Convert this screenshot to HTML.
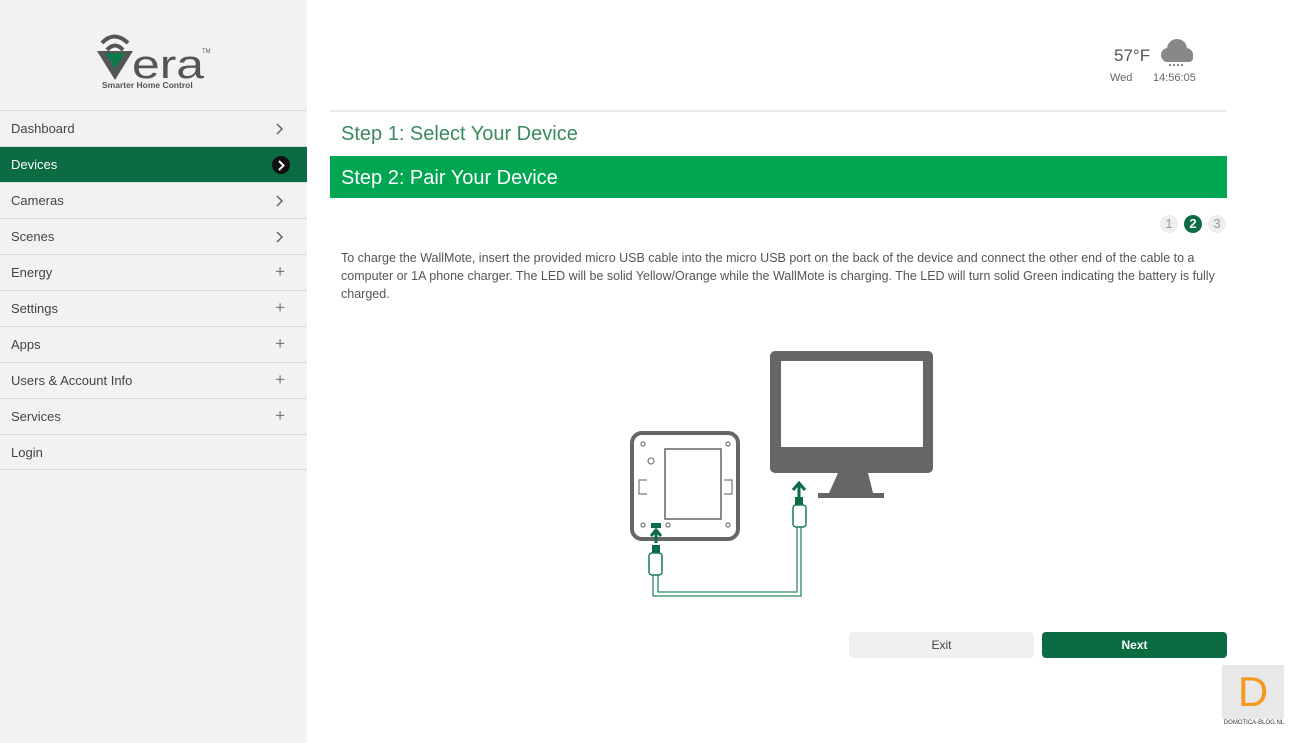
<!DOCTYPE html>
<html><head><meta charset="utf-8"><style>
*{margin:0;padding:0;box-sizing:border-box}
body{width:1300px;height:743px;overflow:hidden;background:#fff;font-family:"Liberation Sans",sans-serif;position:relative}
#side{position:absolute;left:0;top:0;width:307px;height:743px;background:#f2f2f2}
.it{position:absolute;left:0;width:307px;height:36px;border-top:1px solid #d9d9d9;font-size:13px;color:#444;padding:10px 0 0 11px}
.it .a{position:absolute;right:22px;top:7px;font-size:17px;color:#777}
.it svg.a{top:12px;right:23px}
.act{background:#0b6b43;color:#fff}
.abs{position:absolute}
</style></head><body>
<div id="side">
<svg class="abs" style="left:95px;top:30px" width="120" height="62">
<path d="M7 13 Q19 0 33 13" stroke="#555" stroke-width="4" fill="none"/>
<path d="M12 20 Q20 11 28 20" stroke="#555" stroke-width="4" fill="none"/>
<path d="M2 21 L20 50 L38 21 Z" fill="#555"/><path d="M10 23 L20 39 L30 23Z" fill="#0b7a4b"/>
<text x="37" y="48" font-size="40" font-family="Liberation Sans" fill="#555" textLength="72" lengthAdjust="spacingAndGlyphs">era</text>
<text x="107" y="23" font-size="6" fill="#555">TM</text>
<text x="7" y="58" font-size="8.5" font-weight="bold" fill="#555">Smarter Home Control</text>
</svg>
<div class="it" style="top:110px">Dashboard<svg class="a" width="8" height="12"><path d="M1 1l5 5-5 5" stroke="#666" stroke-width="1.5" fill="none"/></svg></div>
<div class="it act" style="top:146px">Devices<span style="position:absolute;right:17px;top:9px;width:18px;height:18px;border-radius:9px;background:#111"><svg style="position:absolute;left:6px;top:4px" width="8" height="11"><path d="M1 1l4.5 4.5L1 10" stroke="#fff" stroke-width="2" fill="none"/></svg></span></div>
<div class="it" style="top:182px">Cameras<svg class="a" width="8" height="12"><path d="M1 1l5 5-5 5" stroke="#666" stroke-width="1.5" fill="none"/></svg></div>
<div class="it" style="top:218px">Scenes<svg class="a" width="8" height="12"><path d="M1 1l5 5-5 5" stroke="#666" stroke-width="1.5" fill="none"/></svg></div>
<div class="it" style="top:254px">Energy<span class="a">+</span></div>
<div class="it" style="top:290px">Settings<span class="a">+</span></div>
<div class="it" style="top:326px">Apps<span class="a">+</span></div>
<div class="it" style="top:362px">Users &amp; Account Info<span class="a">+</span></div>
<div class="it" style="top:398px">Services<span class="a">+</span></div>
<div class="it" style="top:434px;border-bottom:1px solid #d9d9d9;height:36px">Login</div>
</div>
<div class="abs" style="left:1114px;top:46px;font-size:17px;color:#555">57°F</div>
<svg class="abs" style="left:1158px;top:36px" width="38" height="34"><circle cx="19" cy="13" r="10" fill="#888"/><circle cx="10" cy="19" r="7" fill="#888"/><circle cx="28" cy="19" r="7" fill="#888"/><rect x="5" y="16" width="30" height="10" rx="4" fill="#888"/><g fill="#888"><circle cx="12" cy="29" r="1.2"/><circle cx="16" cy="29" r="1.2"/><circle cx="20" cy="29" r="1.2"/><circle cx="24" cy="29" r="1.2"/></g></svg>
<div class="abs" style="left:1110px;top:72px;font-size:11px;color:#666">Wed</div>
<div class="abs" style="left:1153px;top:72px;font-size:11px;color:#666">14:56:05</div>
<div class="abs" style="left:330px;top:110px;width:897px;border-top:2px solid #eaeaea"></div>
<div class="abs" style="left:341px;top:123px;font-size:20px;color:#3a8a5c">Step 1: Select Your Device</div>
<div class="abs" style="left:330px;top:156px;width:897px;height:42px;background:#00a651;color:#fff;font-size:20px;padding:11px 0 0 11px">Step 2: Pair Your Device</div>
<div class="abs" style="left:1160px;top:215px;width:18px;height:18px;border-radius:9px;background:#eee;color:#999;font-size:13px;text-align:center;line-height:18px">1</div>
<div class="abs" style="left:1184px;top:215px;width:18px;height:18px;border-radius:9px;background:#0b6b43;color:#fff;font-size:13px;font-weight:bold;text-align:center;line-height:18px">2</div>
<div class="abs" style="left:1208px;top:215px;width:18px;height:18px;border-radius:9px;background:#eee;color:#999;font-size:13px;text-align:center;line-height:18px">3</div>
<div class="abs" style="left:341px;top:249px;width:900px;white-space:nowrap;font-size:12.5px;line-height:18px;color:#555">To charge the WallMote, insert the provided micro USB cable into the micro USB port on the back of the device and connect the other end of the cable to a<br>computer or 1A phone charger. The LED will be solid Yellow/Orange while the WallMote is charging. The LED will turn solid Green indicating the battery is fully<br>charged.</div>
<svg class="abs" style="left:600px;top:340px" width="350" height="270">
<rect x="32" y="93" width="106" height="106" rx="10" fill="#fff" stroke="#666" stroke-width="4"/>
<rect x="65" y="109" width="56" height="70" fill="none" stroke="#666" stroke-width="1.5"/>
<g fill="none" stroke="#777" stroke-width="1.2"><circle cx="43" cy="104" r="2"/><circle cx="128" cy="104" r="2"/><circle cx="51" cy="121" r="3"/><circle cx="43" cy="185" r="2"/><circle cx="68" cy="185" r="2"/><circle cx="128" cy="185" r="2"/><path d="M47 140h-8v14h8"/><path d="M124 140h8v14h-8"/></g>
<rect x="170" y="11" width="163" height="122" rx="5" fill="#666"/>
<rect x="181" y="21" width="142" height="86" fill="#fff"/>
<path d="M238 133h30l5 20h11v5h-66v-5h11z" fill="#666"/>
<rect x="51" y="183" width="10" height="5" fill="#0b6b43"/>
<path d="M56 203v-12m-5 5l5-6 5 6" stroke="#0b6b43" stroke-width="3" fill="none"/>
<rect x="52" y="205" width="8" height="8" fill="#0b6b43"/>
<rect x="49" y="213" width="13" height="22" rx="3" fill="#fff" stroke="#1a7a4e" stroke-width="1.5"/>
<path d="M199 158v-14m-6 6l6-7 6 7" stroke="#0b6b43" stroke-width="3" fill="none"/>
<rect x="195" y="157" width="8" height="8" fill="#0b6b43"/>
<rect x="193" y="165" width="13" height="22" rx="3" fill="#fff" stroke="#1a7a4e" stroke-width="1.5"/>
<path d="M53 235v21h148v-69M58 235v17h139v-65" stroke="#2e8a5e" stroke-width="1.3" fill="none"/>
</svg>
<div class="abs" style="left:849px;top:632px;width:185px;height:26px;border-radius:4px;background:#f0f0f0;font-size:12px;color:#444;text-align:center;line-height:26px">Exit</div>
<div class="abs" style="left:1042px;top:632px;width:185px;height:26px;border-radius:4px;background:#0b6b43;font-size:12px;font-weight:bold;color:#fff;text-align:center;line-height:26px">Next</div>
<div class="abs" style="left:1222px;top:665px;width:62px;height:54px;background:#e8e8e8;color:#f39a1e;font-size:42px;text-align:center;line-height:54px">D</div>
<div class="abs" style="left:1222px;top:720px;width:64px;font-size:6px;color:#333;text-align:center">DOMOTICA-BLOG.NL</div>
</body></html>
